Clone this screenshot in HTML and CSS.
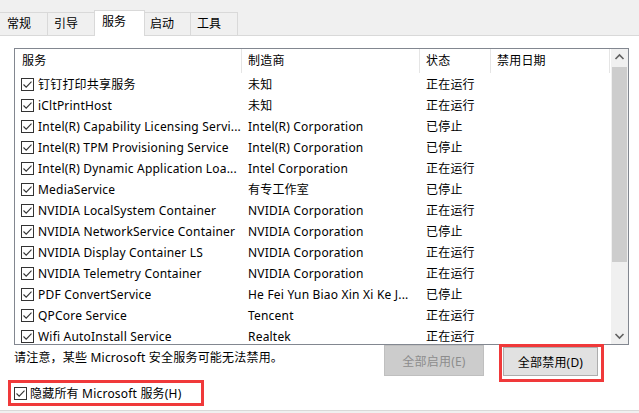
FILE: index.html
```html
<!DOCTYPE html>
<html lang="zh-CN">
<head>
    <meta charset="UTF-8">
    <title>系统配置</title>
    <link rel="stylesheet" href="styles.css">
</head>
<body>
    <div class="tabs">
        <div class="tab first">常规</div>
        <div class="tab">引导</div>
        <div class="tab active">服务</div>
        <div class="tab">启动</div>
        <div class="tab">工具</div>
    </div>
    <div class="panel">
        <div class="list">
            <div class="table">
                <div class="row head">
                    <div class="cell c1">服务</div>
                    <div class="cell">制造商</div>
                    <div class="cell">状态</div>
                    <div class="cell">禁用日期</div>
                </div>
                <div class="row">
                    <div class="cell name"><svg class="cb" viewBox="0 0 13 13"><rect x="0.5" y="0.5" width="12" height="12" fill="#fff" stroke="#333"/><path d="M2.5 6.5 L5.2 9.2 L10.5 3.6" fill="none" stroke="#333" stroke-width="1.1"/></svg><span>钉钉打印共享服务</span></div>
                    <div class="cell">未知</div>
                    <div class="cell">正在运行</div>
                    <div class="cell"></div>
                </div>
                <div class="row">
                    <div class="cell name"><svg class="cb" viewBox="0 0 13 13"><rect x="0.5" y="0.5" width="12" height="12" fill="#fff" stroke="#333"/><path d="M2.5 6.5 L5.2 9.2 L10.5 3.6" fill="none" stroke="#333" stroke-width="1.1"/></svg><span>iCltPrintHost</span></div>
                    <div class="cell">未知</div>
                    <div class="cell">正在运行</div>
                    <div class="cell"></div>
                </div>
                <div class="row">
                    <div class="cell name"><svg class="cb" viewBox="0 0 13 13"><rect x="0.5" y="0.5" width="12" height="12" fill="#fff" stroke="#333"/><path d="M2.5 6.5 L5.2 9.2 L10.5 3.6" fill="none" stroke="#333" stroke-width="1.1"/></svg><span>Intel(R) Capability Licensing Servi...</span></div>
                    <div class="cell">Intel(R) Corporation</div>
                    <div class="cell">已停止</div>
                    <div class="cell"></div>
                </div>
                <div class="row">
                    <div class="cell name"><svg class="cb" viewBox="0 0 13 13"><rect x="0.5" y="0.5" width="12" height="12" fill="#fff" stroke="#333"/><path d="M2.5 6.5 L5.2 9.2 L10.5 3.6" fill="none" stroke="#333" stroke-width="1.1"/></svg><span>Intel(R) TPM Provisioning Service</span></div>
                    <div class="cell">Intel(R) Corporation</div>
                    <div class="cell">已停止</div>
                    <div class="cell"></div>
                </div>
                <div class="row">
                    <div class="cell name"><svg class="cb" viewBox="0 0 13 13"><rect x="0.5" y="0.5" width="12" height="12" fill="#fff" stroke="#333"/><path d="M2.5 6.5 L5.2 9.2 L10.5 3.6" fill="none" stroke="#333" stroke-width="1.1"/></svg><span>Intel(R) Dynamic Application Loa...</span></div>
                    <div class="cell">Intel Corporation</div>
                    <div class="cell">正在运行</div>
                    <div class="cell"></div>
                </div>
                <div class="row">
                    <div class="cell name"><svg class="cb" viewBox="0 0 13 13"><rect x="0.5" y="0.5" width="12" height="12" fill="#fff" stroke="#333"/><path d="M2.5 6.5 L5.2 9.2 L10.5 3.6" fill="none" stroke="#333" stroke-width="1.1"/></svg><span>MediaService</span></div>
                    <div class="cell">有专工作室</div>
                    <div class="cell">已停止</div>
                    <div class="cell"></div>
                </div>
                <div class="row">
                    <div class="cell name"><svg class="cb" viewBox="0 0 13 13"><rect x="0.5" y="0.5" width="12" height="12" fill="#fff" stroke="#333"/><path d="M2.5 6.5 L5.2 9.2 L10.5 3.6" fill="none" stroke="#333" stroke-width="1.1"/></svg><span>NVIDIA LocalSystem Container</span></div>
                    <div class="cell">NVIDIA Corporation</div>
                    <div class="cell">正在运行</div>
                    <div class="cell"></div>
                </div>
                <div class="row">
                    <div class="cell name"><svg class="cb" viewBox="0 0 13 13"><rect x="0.5" y="0.5" width="12" height="12" fill="#fff" stroke="#333"/><path d="M2.5 6.5 L5.2 9.2 L10.5 3.6" fill="none" stroke="#333" stroke-width="1.1"/></svg><span>NVIDIA NetworkService Container</span></div>
                    <div class="cell">NVIDIA Corporation</div>
                    <div class="cell">已停止</div>
                    <div class="cell"></div>
                </div>
                <div class="row">
                    <div class="cell name"><svg class="cb" viewBox="0 0 13 13"><rect x="0.5" y="0.5" width="12" height="12" fill="#fff" stroke="#333"/><path d="M2.5 6.5 L5.2 9.2 L10.5 3.6" fill="none" stroke="#333" stroke-width="1.1"/></svg><span>NVIDIA Display Container LS</span></div>
                    <div class="cell">NVIDIA Corporation</div>
                    <div class="cell">正在运行</div>
                    <div class="cell"></div>
                </div>
                <div class="row">
                    <div class="cell name"><svg class="cb" viewBox="0 0 13 13"><rect x="0.5" y="0.5" width="12" height="12" fill="#fff" stroke="#333"/><path d="M2.5 6.5 L5.2 9.2 L10.5 3.6" fill="none" stroke="#333" stroke-width="1.1"/></svg><span>NVIDIA Telemetry Container</span></div>
                    <div class="cell">NVIDIA Corporation</div>
                    <div class="cell">正在运行</div>
                    <div class="cell"></div>
                </div>
                <div class="row">
                    <div class="cell name"><svg class="cb" viewBox="0 0 13 13"><rect x="0.5" y="0.5" width="12" height="12" fill="#fff" stroke="#333"/><path d="M2.5 6.5 L5.2 9.2 L10.5 3.6" fill="none" stroke="#333" stroke-width="1.1"/></svg><span>PDF ConvertService</span></div>
                    <div class="cell">He Fei Yun Biao Xin Xi Ke J...</div>
                    <div class="cell">已停止</div>
                    <div class="cell"></div>
                </div>
                <div class="row">
                    <div class="cell name"><svg class="cb" viewBox="0 0 13 13"><rect x="0.5" y="0.5" width="12" height="12" fill="#fff" stroke="#333"/><path d="M2.5 6.5 L5.2 9.2 L10.5 3.6" fill="none" stroke="#333" stroke-width="1.1"/></svg><span>QPCore Service</span></div>
                    <div class="cell">Tencent</div>
                    <div class="cell">正在运行</div>
                    <div class="cell"></div>
                </div>
                <div class="row">
                    <div class="cell name"><svg class="cb" viewBox="0 0 13 13"><rect x="0.5" y="0.5" width="12" height="12" fill="#fff" stroke="#333"/><path d="M2.5 6.5 L5.2 9.2 L10.5 3.6" fill="none" stroke="#333" stroke-width="1.1"/></svg><span>Wifi AutoInstall Service</span></div>
                    <div class="cell">Realtek</div>
                    <div class="cell">正在运行</div>
                    <div class="cell"></div>
                </div>
            </div>
            <div class="scrollbar">
                <div class="arrow"><svg viewBox="0 0 17 17"><path d="M4.5 10 L8.5 6 L12.5 10" fill="none" stroke="#606060" stroke-width="1.6"/></svg></div>
                <div class="track"><div class="thumb"></div></div>
                <div class="arrow"><svg viewBox="0 0 17 17"><path d="M4.5 7 L8.5 11 L12.5 7" fill="none" stroke="#606060" stroke-width="1.6"/></svg></div>
            </div>
        </div>
        <div class="actions">
            <p class="note">请注意，某些 Microsoft 安全服务可能无法禁用。</p>
            <button class="btn" disabled>全部启用(E)</button>
            <div class="mark btnMark"><button class="btn">全部禁用(D)</button></div>
        </div>
        <div class="mark hideMark">
            <svg class="cb" viewBox="0 0 13 13"><rect x="0.5" y="0.5" width="12" height="12" fill="#fff" stroke="#333"/><path d="M2.5 6.5 L5.2 9.2 L10.5 3.6" fill="none" stroke="#333" stroke-width="1.1"/></svg>
            <span>隐藏所有 Microsoft 服务(H)</span>
        </div>
    </div>
</body>
</html>
```

FILE: styles.css
```css
body
{
    margin: 0;
    background: #f0f0f0;
    font-family: "Noto Sans", "Noto Sans CJK SC", sans-serif;
    font-size: 12px;
    letter-spacing: 0.2px;
    color: #000;
}

.tabs
{
    display: flex;
    align-items: flex-end;
    height: 35px;
    letter-spacing: 0;
}

.tab
{
    box-sizing: border-box;
    height: 23px;
    line-height: 22px;
    padding: 0 16px 0 6px;
    border: 1px solid #d9d9d9;
    border-bottom: none;
    margin-left: -1px;
    background: #f0f0f0;
}

.tab.first
{
    margin-left: 0;
    border-left: none;
    padding-left: 7px;
}

.tab.active
{
    position: relative;
    z-index: 1;
    height: 26px;
    line-height: 21px;
    margin: 0 -1px -1px -1px;
    padding: 0 18px 0 7px;
    background: #fff;
}

.panel
{
    box-sizing: border-box;
    height: 376px;
    background: #fff;
    border-top: 1px solid #d9d9d9;
    border-bottom: 1px solid #d9d9d9;
    padding: 12px 0 0 14px;
}

.list
{
    box-sizing: border-box;
    width: 615px;
    height: 297px;
    border: 1px solid #828790;
    display: flex;
}

.table
{
    flex: 1;
    overflow: hidden;
}

.row
{
    display: grid;
    grid-template-columns: 227px 178px 71px 119px;
    height: 21px;
    line-height: 21px;
}

.row.head
{
    height: 25px;
    line-height: 24px;
}

.cell
{
    box-sizing: border-box;
    padding-left: 6px;
    white-space: nowrap;
    overflow: hidden;
}

.head .cell
{
    border-right: 1px solid #e5e5e5;
    height: 24px;
}

.head .c1
{
    padding-left: 7px;
}

.cell.name
{
    display: flex;
    align-items: center;
    gap: 4px;
}

.cb
{
    width: 13px;
    height: 13px;
    flex: none;
}

.scrollbar
{
    width: 17px;
    background: #f0f0f0;
    display: flex;
    flex-direction: column;
}

.arrow
{
    height: 17px;
}

.arrow svg
{
    display: block;
    width: 17px;
    height: 17px;
}

.track
{
    flex: 1;
    padding: 1px 1px 0 1px;
}

.thumb
{
    height: 195px;
    background: #cdcdcd;
}

.actions
{
    display: flex;
    align-items: flex-start;
    width: 615px;
    height: 37px;
}

.note
{
    margin: 4px 0 0 0;
    flex: 1;
    line-height: 18px;
}

.btn
{
    font-family: inherit;
    font-size: 12px;
    letter-spacing: 0.2px;
    box-sizing: border-box;
    width: 100px;
    height: 31px;
    border: 1px solid #adadad;
    background: #e1e1e1;
    color: #000;
    padding: 0;
}

.btn:disabled
{
    background: #cccccc;
    border-color: #bfbfbf;
    color: #8c8c8c;
    margin-right: 15px;
}

.mark
{
    box-sizing: border-box;
    border: 3px solid #f0393a;
}

.btnMark
{
    margin: -1px 25px 0 0;
    padding: 0 3px 3px 1px;
}

.btnMark .btn
{
    width: 95px;
    height: 29px;
}

.hideMark
{
    width: 196px;
    height: 26px;
    margin: -2px 0 0 -6px;
    display: flex;
    align-items: center;
    gap: 3px;
    padding-left: 3px;
}
```
